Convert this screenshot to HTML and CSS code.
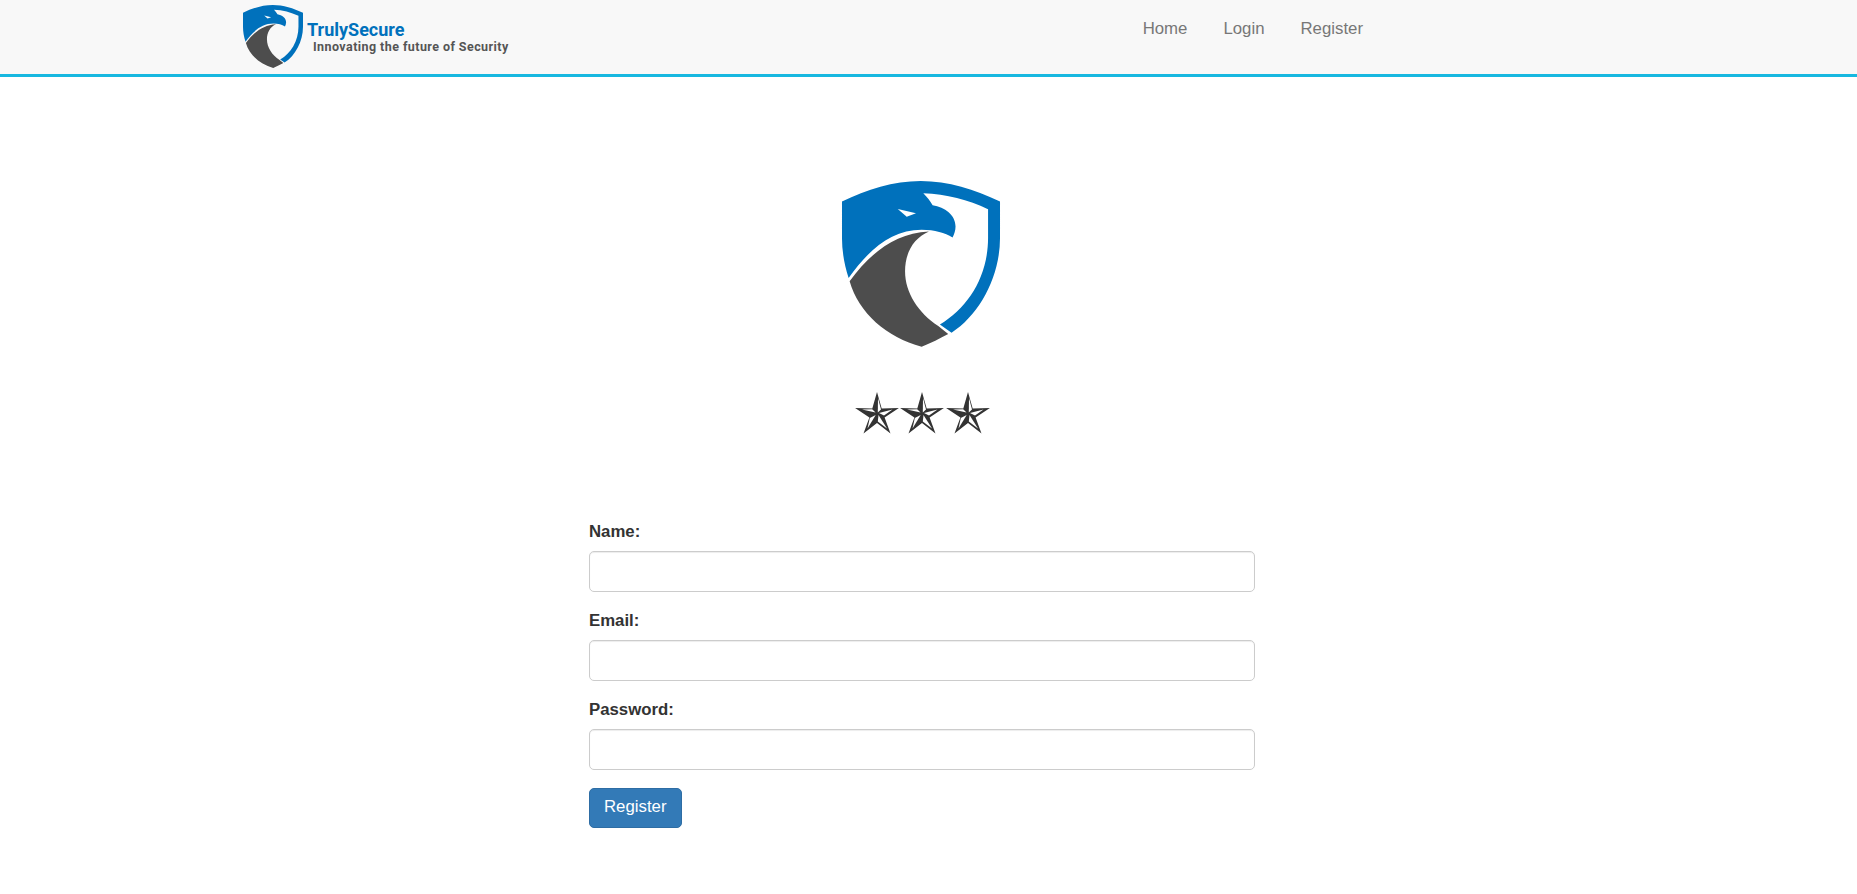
FILE: index.html
```html
<!doctype html>
<html>
	<head>
		<meta charset="utf-8" />
		<title>TrulySecure</title>
		<link rel="stylesheet" href="styles.css">
	</head>
	<body>
		<svg class="defs" width="0" height="0">
			<symbol id="shield" viewBox="65 33 476 500">
				<path class="blue" d="M65 95 C140 58 220 33 302 33 C385 33 465 58 541 95 L541 205 C541 320 480 435 395 490 L360 465 C445 415 505 320 505 205 L505 118 C445 90 380 72 310 70 C322 82 330 92 338 106 C375 112 407 135 407 170 C407 182 403 193 398 203 C375 190 345 180 305 180 C215 180 145 240 85 325 C72 285 65 245 65 205 Z"/>
				<path class="eye" d="M233 117 L288 130 L260 141 Z"/>
				<path class="gray" d="M88 335 C150 250 225 190 327 185 C280 205 255 250 255 305 C255 370 295 430 355 470 L385 494 C360 507 333 522 305 532 C200 505 115 430 88 335 Z"/>
			</symbol>
			<symbol id="star" viewBox="0 0 44 42">
				<polygon class="star-dark" points="22,0 26.7,16.5 43.9,15.9 29.6,25.5 35.5,41.6 22,31 8.5,41.6 14.4,25.5 0.1,15.9 17.3,16.5"/>
				<polygon class="star-light" points="23,6 22.8,20.5 26,17.5"/>
				<polygon class="star-light" points="37.5,17.5 24,21 29,23.5"/>
				<polygon class="star-light" points="32,36.5 23.5,23 22.8,29.5"/>
				<polygon class="star-light" points="7,17.5 20.5,20.5 17.2,17.2"/>
				<polygon class="star-light" points="12.5,36.5 20.7,23 14.8,26"/>
			</symbol>
		</svg>

		<nav class="navbar">
			<div class="navbar-inner">
				<a class="brand" href="#">
					<svg class="brand-logo"><use href="#shield"/></svg>
					<span class="brand-text">
						<span class="brand-name">TrulySecure</span>
						<span class="brand-tag">Innovating the future of Security</span>
					</span>
				</a>
				<ul class="nav-links">
					<li><a href="#">Home</a></li>
					<li><a href="#">Login</a></li>
					<li><a href="#">Register</a></li>
				</ul>
			</div>
		</nav>

		<main>
			<div class="hero">
				<svg class="hero-logo"><use href="#shield"/></svg>
				<div class="stars">
					<svg class="star"><use href="#star"/></svg>
					<svg class="star"><use href="#star"/></svg>
					<svg class="star"><use href="#star"/></svg>
				</div>
			</div>

			<form class="register-form">
				<div class="form-group">
					<label for="name">Name:</label>
					<input type="text" id="name" class="form-control" />
				</div>
				<div class="form-group">
					<label for="email">Email:</label>
					<input type="email" id="email" class="form-control" />
				</div>
				<div class="form-group">
					<label for="password">Password:</label>
					<input type="password" id="password" class="form-control" />
				</div>
				<button type="submit" class="btn">Register</button>
			</form>
		</main>
	</body>
</html>
```

FILE: styles.css
```css
* {
	box-sizing: border-box;
}

body {
	margin: 0;
	font-family: "Liberation Sans", Arial, sans-serif;
	font-size: 16.8px;
	line-height: 24px;
	color: #333;
	background: #fff;
}

.defs {
	display: block;
	height: 0;
}

.blue {
	fill: #0071bc;
}

.gray {
	fill: #4d4d4d;
}

.eye {
	fill: #fff;
}

.star-dark {
	fill: #333;
}

.star-light {
	fill: #fff;
}

.navbar {
	height: 77px;
	background: #f8f8f8;
	border-bottom: 3px solid #17b8e0;
}

.navbar-inner {
	display: flex;
	justify-content: space-between;
	width: 1138px;
	margin-left: 243px;
}

.brand {
	display: flex;
	text-decoration: none;
	padding-top: 4px;
}

.brand-logo {
	width: 60px;
	height: 65px;
}

.brand-text {
	display: flex;
	flex-direction: column;
	margin-left: 4px;
	padding-top: 16px;
}

.brand-name {
	font-family: Roboto, sans-serif;
	font-size: 18px;
	line-height: 20px;
	font-weight: 700;
	color: #0071bc;
}

.brand-tag {
	font-family: Roboto, sans-serif;
	font-size: 12.5px;
	line-height: 14px;
	font-weight: 700;
	letter-spacing: .43px;
	color: #555;
	margin-left: 6px;
	white-space: nowrap;
}

.nav-links {
	display: flex;
	list-style: none;
	margin: 0;
	padding: 0;
}

.nav-links a {
	display: block;
	padding: 17px 18px;
	color: #777;
	text-decoration: none;
}

.hero {
	display: flex;
	flex-direction: column;
	align-items: center;
	padding-top: 104px;
	width: 1844px;
}

.hero-logo {
	width: 160px;
	height: 166px;
	margin-right: 3px;
}

.stars {
	display: flex;
	gap: 1.5px;
	margin-top: 45px;
}

.star {
	width: 44px;
	height: 42px;
}

.register-form {
	width: 666px;
	margin: 86px 0 0 589px;
}

.form-group {
	margin-bottom: 17px;
}

label {
	display: block;
	font-weight: 700;
	margin-bottom: 7px;
}

.form-control {
	display: block;
	width: 100%;
	height: 41px;
	border: 1.2px solid #ccc;
	border-radius: 5px;
	box-shadow: inset 0 1px 1px rgba(0, 0, 0, .075);
	background: #fff;
}

.btn {
	display: block;
	height: 40px;
	margin-top: 18px;
	padding: 0 14px 2px;
	font: inherit;
	color: #fff;
	background: #337ab7;
	border: 1px solid #2e6da4;
	border-radius: 5px;
}
```
